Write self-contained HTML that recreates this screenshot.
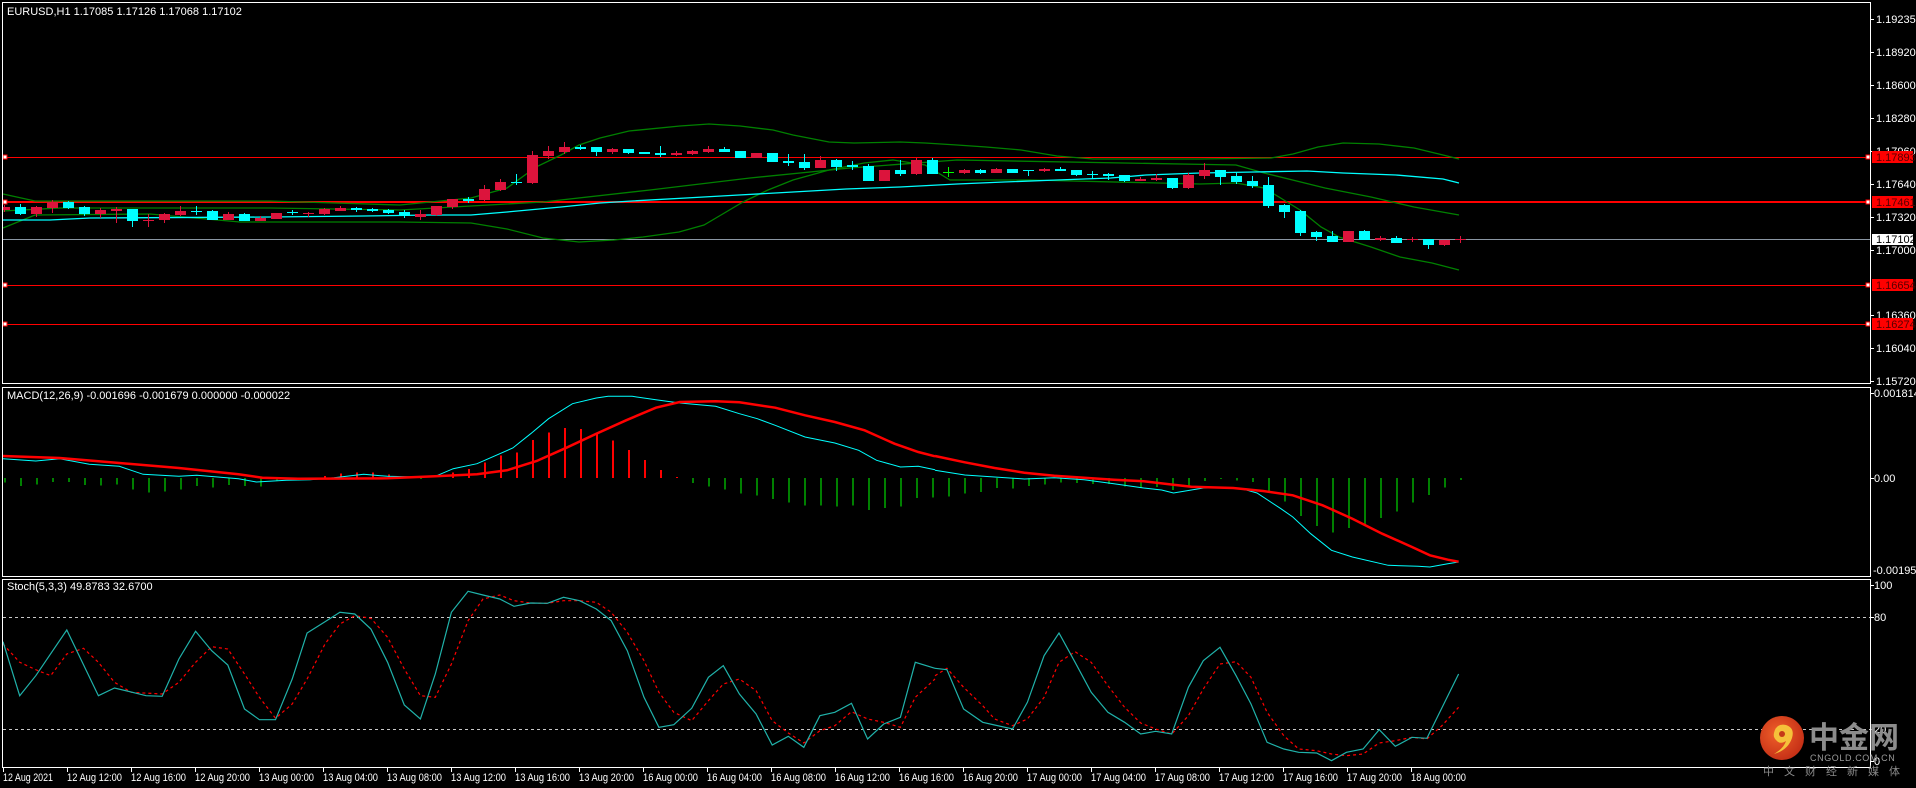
<!DOCTYPE html>
<html><head><meta charset="utf-8">
<style>
html,body{margin:0;padding:0;background:#000;width:1916px;height:788px;overflow:hidden}
svg{display:block}
text{font-family:"Liberation Sans","Noto Sans CJK SC",sans-serif;font-size:11px;fill:#fff}
</style></head>
<body>
<svg id="s" width="1916" height="788" xmlns="http://www.w3.org/2000/svg">
<rect width="1916" height="788" fill="#000"/>
<g id="chart"></g>
<g fill="none" stroke="#fff" stroke-width="1" shape-rendering="crispEdges">
<rect x="2.5" y="2.5" width="1868" height="381"/>
<rect x="2.5" y="387.5" width="1868" height="189"/>
<rect x="2.5" y="579.5" width="1868" height="188"/>
</g>
<text x="7" y="15">EURUSD,H1  1.17085 1.17126 1.17068 1.17102</text>
<text x="7" y="399">MACD(12,26,9) -0.001696 -0.001679 0.000000 -0.000022</text>
<text x="7" y="590">Stoch(5,3,3) 49.8783 32.6700</text>
<g id="ax"></g>
<g>
<text x="1876" y="23">1.19235</text>
<text x="1876" y="56">1.18920</text>
<text x="1876" y="89">1.18600</text>
<text x="1876" y="122">1.18280</text>
<text x="1876" y="155">1.17960</text>
<text x="1876" y="188">1.17640</text>
<text x="1876" y="221">1.17320</text>
<text x="1876" y="254">1.17000</text>
<text x="1876" y="319">1.16360</text>
<text x="1876" y="352">1.16040</text>
<text x="1876" y="385">1.15720</text>
<rect x="1872" y="151" width="41" height="12" fill="#ff0000"/><text x="1876" y="161" style="fill:#500">1.17893</text>
<rect x="1872" y="196" width="41" height="12" fill="#ff0000"/><text x="1876" y="206" style="fill:#500">1.17461</text>
<rect x="1872" y="234" width="41" height="11" fill="#fff"/><text x="1876" y="243" style="fill:#000">1.17102</text>
<rect x="1872" y="279" width="41" height="12" fill="#ff0000"/><text x="1876" y="289" style="fill:#500">1.16654</text>
<rect x="1872" y="318" width="41" height="12" fill="#ff0000"/><text x="1876" y="328" style="fill:#500">1.16274</text>
<text x="1874" y="397">0.001814</text>
<text x="1874" y="482">0.00</text>
<text x="1873" y="574">-0.001958</text>
<text x="1874" y="589">100</text>
<text x="1874" y="621">80</text>
<text x="1874" y="733">20</text>
<text x="1874" y="765">0</text>
</g>
<g>
<text x="3" y="781" textLength="50" lengthAdjust="spacingAndGlyphs">12 Aug 2021</text>
<text x="67" y="781" textLength="55" lengthAdjust="spacingAndGlyphs">12 Aug 12:00</text>
<text x="131" y="781" textLength="55" lengthAdjust="spacingAndGlyphs">12 Aug 16:00</text>
<text x="195" y="781" textLength="55" lengthAdjust="spacingAndGlyphs">12 Aug 20:00</text>
<text x="259" y="781" textLength="55" lengthAdjust="spacingAndGlyphs">13 Aug 00:00</text>
<text x="323" y="781" textLength="55" lengthAdjust="spacingAndGlyphs">13 Aug 04:00</text>
<text x="387" y="781" textLength="55" lengthAdjust="spacingAndGlyphs">13 Aug 08:00</text>
<text x="451" y="781" textLength="55" lengthAdjust="spacingAndGlyphs">13 Aug 12:00</text>
<text x="515" y="781" textLength="55" lengthAdjust="spacingAndGlyphs">13 Aug 16:00</text>
<text x="579" y="781" textLength="55" lengthAdjust="spacingAndGlyphs">13 Aug 20:00</text>
<text x="643" y="781" textLength="55" lengthAdjust="spacingAndGlyphs">16 Aug 00:00</text>
<text x="707" y="781" textLength="55" lengthAdjust="spacingAndGlyphs">16 Aug 04:00</text>
<text x="771" y="781" textLength="55" lengthAdjust="spacingAndGlyphs">16 Aug 08:00</text>
<text x="835" y="781" textLength="55" lengthAdjust="spacingAndGlyphs">16 Aug 12:00</text>
<text x="899" y="781" textLength="55" lengthAdjust="spacingAndGlyphs">16 Aug 16:00</text>
<text x="963" y="781" textLength="55" lengthAdjust="spacingAndGlyphs">16 Aug 20:00</text>
<text x="1027" y="781" textLength="55" lengthAdjust="spacingAndGlyphs">17 Aug 00:00</text>
<text x="1091" y="781" textLength="55" lengthAdjust="spacingAndGlyphs">17 Aug 04:00</text>
<text x="1155" y="781" textLength="55" lengthAdjust="spacingAndGlyphs">17 Aug 08:00</text>
<text x="1219" y="781" textLength="55" lengthAdjust="spacingAndGlyphs">17 Aug 12:00</text>
<text x="1283" y="781" textLength="55" lengthAdjust="spacingAndGlyphs">17 Aug 16:00</text>
<text x="1347" y="781" textLength="55" lengthAdjust="spacingAndGlyphs">17 Aug 20:00</text>
<text x="1411" y="781" textLength="55" lengthAdjust="spacingAndGlyphs">18 Aug 00:00</text>
</g>
<g>
<defs><radialGradient id="lg" cx="0.4" cy="0.4" r="0.7"><stop offset="0" stop-color="#f0602a"/><stop offset="1" stop-color="#c02a14"/></radialGradient></defs>
<circle cx="1782" cy="738" r="22" fill="url(#lg)"/>
<path d="M1774 733 q2 -10 12 -8 q9 3 6 13 q-4 12 -18 16 q10 -6 12 -13 q-6 4 -10 -1 q-3 -3 -2 -7z" fill="#f5c23a"/>
<circle cx="1782" cy="734" r="3" fill="#c53a18"/>
<text x="1809" y="748" style="font-size:30px;font-weight:bold;fill:#8c8c8c;font-family:'Noto Sans CJK SC','WenQuanYi Zen Hei',sans-serif">中金网</text>
<text x="1810" y="761" style="font-size:9px;fill:#9a9a9a;letter-spacing:0.6px">CNGOLD.COM.CN</text>
<text x="1763" y="775" style="font-size:11px;fill:#8a8a8a;letter-spacing:10px;font-family:'Noto Sans CJK SC',sans-serif">中文财经新媒体</text>
</g>
</svg>
<script>
(function(){
var g=document.getElementById('chart'),h='';
function pl(p,fx,fy,c,w,d){var s='';for(var i=0;i<p.length;i+=2){s+=fx(p[i]).toFixed(1)+','+fy(p[i+1]).toFixed(1)+' ';}
h+='<polyline points="'+s+'" fill="none" stroke="'+c+'" stroke-width="'+w+'"'+(d?' stroke-dasharray="'+d+'"':'')+'/>';}
var I=function(v){return v};
h+='<line x1="3" x2="1870" y1="157.5" y2="157.5" stroke="#ff0000"/>';
h+='<line x1="3" x2="1870" y1="202" y2="202" stroke="#ff0000" stroke-width="2"/>';
h+='<line x1="3" x2="1870" y1="239.5" y2="239.5" stroke="#8a96a3"/>';
h+='<line x1="3" x2="1870" y1="285.5" y2="285.5" stroke="#ff0000"/>';
h+='<line x1="3" x2="1870" y1="324.5" y2="324.5" stroke="#ff0000"/>';
[157,202,285,324].forEach(function(y){h+='<rect x="3" y="'+(y-2)+'" width="4" height="4" fill="#fff" stroke="#f00"/>';h+='<rect x="1866" y="'+(y-2)+'" width="4" height="4" fill="#fff" stroke="#f00"/>';});
var up=[3,194,35,201,270,201,400,205,471,198,507,188,536,167,561,155,579,145,600,138,629,131,680,126,709,124,740,126,773,130,793,135,829,142,854,143,900,142,925,143,957,145,986,147,1021,150,1057,156,1093,159,1200,159,1271,158,1293,154,1318,147,1343,143,1379,144,1414,148,1443,155,1459,159];
var mid=[3,220,50,220,90,218,270,217,363,216,430,215,471,215,507,212,561,207,600,203,632,201,686,198,739,195,793,192,846,189,900,187,957,184,1004,182,1057,180,1111,178,1146,175,1200,173,1254,172,1307,171,1343,173,1396,175,1443,179,1459,183];
var g2=[3,211,60,208,270,208,400,210,543,202,650,190,750,178,850,168,957,160,1236,165,1264,173,1325,188,1371,197,1414,207,1459,215];
var lo=[3,228,35,215,150,214,240,222,400,222,471,223,507,229,543,238,579,242,614,240,643,237,679,232,704,225,721,215,743,202,768,190,793,180,829,170,864,163,893,160,925,165,950,180,1030,180,1200,184,1236,183,1264,188,1279,197,1300,210,1321,227,1339,237,1371,247,1400,257,1432,263,1459,270];
pl(up,I,I,'#008000',1.3);pl(g2,I,I,'#008000',1.3);pl(lo,I,I,'#008000',1.3);pl(mid,I,I,'#00ffff',1.3);
var C={r:'#dc143c',c:'#00ffff',g:'#00ff00'};
var cd=[
'r 207 210 205 212','c 207 214 204 215','r 207 214 206 217','r 202 208 200 213','c 202 208 201 209','c 207 214 206 216','r 210 214 208 218','r 209 211 207 223','c 209 221 209 227','r 220 221 214 227',
'r 214 220 213 223','r 211 215 206 216','c 211 212 206 215','c 211 220 210 220','r 214 220 212 220','c 214 221 213 221','r 218 221 216 221','r 213 219 213 219','c 212 213 210 215','r 213 214 212 217',
'r 209 214 208 215','r 208 211 206 211','c 208 210 207 212','c 209 211 208 212','c 210 213 209 214','c 212 216 210 218','r 214 217 210 220','r 206 215 206 216','r 199 207 199 209','c 199 201 197 203',
'r 189 200 185 201','r 182 190 179 191','c 182 183 174 185','r 155 183 151 184','r 151 156 146 159','r 147 152 142 154','c 147 149 145 150','c 147 152 147 156','r 149 152 148 154','c 149 153 149 154',
'c 152 154 152 154','c 153 155 146 157','r 153 155 151 156','r 151 154 150 155','r 149 152 146 153','c 149 152 147 152','c 151 158 151 158','r 153 158 153 158','c 153 162 153 162','c 161 163 154 166',
'c 162 168 154 170','r 160 168 156 168','c 160 167 159 171','c 165 167 161 170','c 166 181 164 181','r 170 181 170 181','c 170 174 160 176','r 160 174 158 175','c 160 174 158 174','g 172 173 167 177',
'r 170 173 169 174','c 170 173 169 174','r 169 173 168 173','c 169 173 169 173','c 170 171 170 176','r 169 171 168 172','c 169 171 167 171','c 170 175 170 176','c 174 175 171 179','c 174 176 173 180',
'c 175 181 175 182','r 179 181 177 181','r 178 180 174 181','c 178 188 178 189','r 175 188 173 189','r 170 176 163 179','c 170 177 170 185','c 176 182 172 184','c 181 186 176 188','c 185 206 177 208',
'c 205 212 204 218','c 211 233 210 236','c 232 237 231 241','c 236 242 231 242','r 231 242 231 242','c 231 240 230 240','r 238 240 236 241','c 238 243 236 243','r 239 240 237 242','c 239 245 239 249',
'r 240 245 240 246','r 239 240 236 243'];
var cs='';
cd.forEach(function(s,i){var a=s.split(' '),col=C[a[0]],bt=+a[1],bb=+a[2],wt=+a[3],wb=+a[4];var cx=Math.round(3.5+16*i);
cs+='<rect x="'+cx+'" y="'+wt+'" width="1" height="'+Math.max(1,wb-wt)+'" fill="'+col+'"/>';
var x0=cx-5,w=11;if(x0<3){w-=3-x0;x0=3;}
cs+='<rect x="'+x0+'" y="'+bt+'" width="'+w+'" height="'+Math.max(1,bb-bt)+'" fill="'+col+'"/>';});
h+='<g shape-rendering="crispEdges">'+cs+'</g>';
var hv=[-4.7,-8,-6.7,-4,-4,-7,-7.7,-6.7,-11.7,-14.3,-13.3,-11.7,-8,-9.3,-7,-8,-8.3,-2.7,-1,0,2,4.7,5.7,5.7,3.3,0,-1,0,5.7,9,15.7,22.3,25.7,38,45.7,50,49,44.7,37.3,28,18,8,1,-5,-8.3,-11.3,-15.3,-17.7,-21,-24.3,-27.7,-27.7,-28.7,-27.7,-32,-30,-28.7,-20,-19.3,
-18.3,-15.3,-14,-10,-10.3,-8,-6.3,-4.3,-5,-6,-6,-8.7,-9.3,-9,-12,-8,-3,-1,-2.3,-4,-14.3,-23.3,-38,-48,-54.3,-50,-46.7,-40,-33.3,-24.3,-17,-9.3,-2];
var hs='';
hv.forEach(function(v,i){if(Math.abs(v)<0.5)return;var cx=Math.round(3.5+16*i);var y0=478,y1=478-v;
hs+='<rect x="'+cx+'" y="'+Math.min(y0,y1)+'" width="2" height="'+Math.abs(v)+'" fill="'+(v>0?'#ff0000':'#008000')+'"/>';});
h+='<g shape-rendering="crispEdges">'+hs+'</g>';
var z9x=function(X){return X/1.677},z10x=function(X){return 935+X/1.677},my=function(Y){return 387+Y/3},sy=function(Y){return 579+Y/3};
var mc1=[5,215,60,222,100,215,150,232,200,238,240,262,300,268,330,265,400,275,430,285,480,280,520,278,560,272,610,262,650,268,700,270,730,268,760,245,800,230,860,183,890,140,920,95,960,50,1000,33,1020,28,1060,28,1100,38,1140,48,1200,58,1240,80,1270,95,1300,115,1350,150,1400,168,1440,190,1470,220,1510,240,1540,238,1568,248];
var mc2=[0,250,50,264,100,270,150,276,200,272,250,278,300,290,350,303,380,309,400,318,420,312,450,303,500,303,520,308,540,318,580,365,600,390,630,440,665,490,700,510,760,535,810,538,830,540,860,530,878,525];
var ms1=[5,207,100,213,200,228,300,243,400,262,440,272,500,275,650,274,730,268,800,262,850,250,900,222,950,182,1000,140,1050,100,1100,62,1140,45,1200,43,1240,46,1300,62,1350,85,1400,105,1450,130,1500,170,1540,195,1568,208];
var ms2=[0,207,50,226,100,243,150,257,200,266,300,278,350,283,400,293,430,299,500,303,550,312,600,325,650,355,700,395,750,440,800,480,830,505,860,518,878,524];
pl(mc1,z9x,my,'#00ffff',1);pl(mc2,z10x,my,'#00ffff',1);
pl(ms1,z9x,my,'#ff0000',2.5);pl(ms2,z10x,my,'#ff0000',2.5);
h+='<line x1="3" x2="1870" y1="617.5" y2="617.5" stroke="#c8c8c8" stroke-dasharray="3,3"/>';
h+='<line x1="3" x2="1870" y1="729.5" y2="729.5" stroke="#c8c8c8" stroke-dasharray="3,3"/>';
var sm1=[5,188,33,350,60,290,112,153,165,350,192,327,245,350,272,352,300,240,328,157,355,215,382,258,410,390,435,422,462,422,490,300,515,162,545,128,570,100,595,105,622,150,650,250,678,378,705,420,730,285,757,100,785,37,810,48,838,60,862,82,890,72,918,73,945,55,972,65,1000,90,1025,125,1052,215,1080,355,1105,445,1130,437,1160,388,1188,295,1213,260,1240,345,1268,405,1295,498,1322,472,1348,505,1375,410,1400,400,1428,373,1455,480,1482,435,1510,415,1535,250,1568,268];
var ss1=[5,195,33,250,60,272,85,290,112,225,140,208,165,250,192,310,220,340,272,345,300,310,328,250,355,203,382,210,410,285,435,355,462,418,490,375,515,300,545,195,570,135,595,110,622,118,650,175,678,270,705,350,730,355,757,255,785,125,810,60,838,48,862,65,890,72,918,73,945,65,972,65,1000,70,1025,100,1052,160,1080,245,1105,340,1130,400,1160,425,1188,365,1213,315,1240,300,1268,335,1295,425,1322,462,1348,492,1375,455,1400,440,1428,398,1455,420,1482,430,1510,445,1535,355,1568,300];
var sm2=[0,268,20,272,48,390,80,430,100,438,130,450,155,370,183,230,208,162,235,250,262,340,290,400,318,430,345,465,370,457,397,465,425,325,450,245,478,205,505,290,530,375,557,490,585,510,610,520,640,522,665,545,690,520,718,510,745,452,772,502,800,475,825,478,878,285];
var ss2=[0,290,20,268,48,325,80,380,100,420,130,440,155,420,183,355,208,250,235,218,262,250,290,320,318,385,345,432,370,450,397,465,425,410,450,330,478,255,505,248,530,295,557,400,585,470,610,510,640,515,665,525,690,530,718,525,745,492,772,485,800,475,825,480,850,440,878,385];
pl(ss1,z9x,sy,'#ff0000',1.2,'3,3');pl(ss2,z10x,sy,'#ff0000',1.2,'3,3');
pl(sm1,z9x,sy,'#20b2aa',1.2);pl(sm2,z10x,sy,'#20b2aa',1.2);
g.innerHTML=h;
var t='';
[18.7,51.7,84.7,117.7,150.7,183.7,216.7,249.7,315,348,381,393,478,585,617,729,761].forEach(function(y){t+='<rect x="1871" y="'+Math.round(y)+'" width="3" height="1" fill="#fff"/>';});
for(var k=0;k<23;k++){t+='<rect x="'+(3+64*k)+'" y="768" width="1" height="4" fill="#fff"/>';}
document.getElementById('ax').innerHTML=t;
})();
</script>
</body></html>
